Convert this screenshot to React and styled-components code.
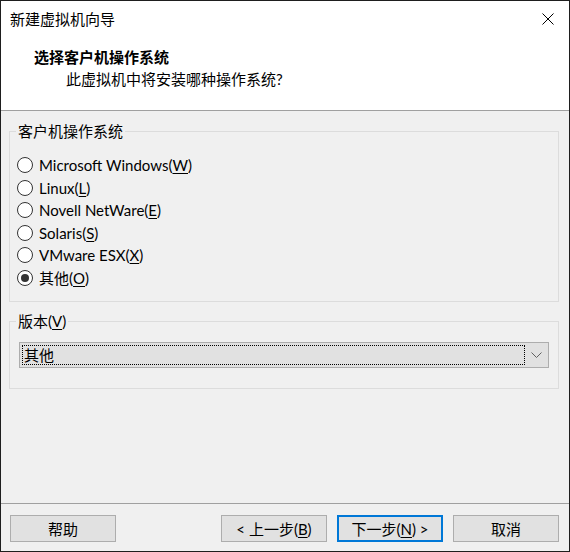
import React from "react";
import styled, { createGlobalStyle } from "styled-components";

const GlobalStyle = createGlobalStyle`
  html, body {
    margin: 0;
    padding: 0;
    background: #f0f0f0;
  }
  body {
    font-family: Lato, "Noto Sans CJK SC", sans-serif;
    font-size: 15px;
    color: #000;
  }
  * {
    box-sizing: border-box;
  }
`;

const Window = styled.div`
  width: 570px;
  height: 552px;
  border: 1px solid #1e1e1e;
  background: #f0f0f0;
  display: flex;
  flex-direction: column;
`;

const TitleBar = styled.div`
  height: 36px;
  background: #fff;
  display: flex;
  align-items: center;
  justify-content: space-between;
  padding-left: 9px;
  line-height: 22px;
`;

const CloseButton = styled.div`
  width: 46px;
  height: 36px;
  display: flex;
  align-items: center;
  justify-content: center;
  margin-right: -2px;
`;

const Header = styled.div`
  background: #fff;
  padding: 9px 0 20px 0;
  border-bottom: 1px solid #a0a0a0;
`;

const HeaderTitle = styled.div`
  font-weight: bold;
  line-height: 22px;
  padding-left: 33px;
`;

const HeaderSub = styled.div`
  line-height: 22px;
  padding-left: 65px;
`;

const Body = styled.div`
  flex: 1;
  padding: 9px 10px 0 8px;
  display: flex;
  flex-direction: column;
  gap: 8px;
`;

const Group = styled.fieldset`
  margin: 0;
  border: 1px solid #dcdcdc;
  padding: ${(p) => p.$pad};
  min-width: 0;
`;

const Legend = styled.legend`
  padding: 0 2px;
  margin-left: -1px;
  line-height: 22px;
`;

const RadioRow = styled.label`
  display: flex;
  align-items: center;
  height: 22.5px;
  gap: 6px;
`;

const RadioCircle = styled.span`
  width: 16px;
  height: 16px;
  border-radius: 50%;
  border: 1px solid #333;
  background: #fff;
  display: flex;
  align-items: center;
  justify-content: center;

  &::after {
    content: "";
    width: 8px;
    height: 8px;
    border-radius: 50%;
    background: ${(p) => (p.$checked ? "#333" : "transparent")};
  }
`;

const Key = styled.span`
  text-decoration: underline;
  text-underline-offset: 2px;
`;

const Combo = styled.div`
  height: 26px;
  margin: 0 2px 0 2px;
  border: 1px solid #adadad;
  background: #e1e1e1;
  display: flex;
  align-items: stretch;
  padding: 2px 0 2px 2px;
`;

const ComboValue = styled.div`
  flex: 1;
  border: 1px dotted #000;
  display: flex;
  align-items: center;
  padding-left: 1px;
  line-height: 20px;
`;

const ComboArrow = styled.div`
  width: 23px;
  display: flex;
  align-items: center;
  justify-content: center;
`;

const Footer = styled.div`
  border-top: 1px solid #a0a0a0;
  height: 48px;
  padding: 11px 10px 0 9px;
  display: flex;
  align-items: flex-start;
  gap: 10px;
`;

const Spacer = styled.div`
  flex: 1;
`;

const Button = styled.div`
  width: 106px;
  height: 27px;
  background: #e1e1e1;
  border: ${(p) => (p.$default ? "2px solid #0078d7" : "1px solid #adadad")};
  display: flex;
  align-items: center;
  justify-content: center;
  line-height: 20px;
`;

const options = [
  ["Microsoft Windows", "W"],
  ["Linux", "L"],
  ["Novell NetWare", "E"],
  ["Solaris", "S"],
  ["VMware ESX", "X"],
  ["其他", "O"],
];

export default function App() {
  return (
    <>
      <GlobalStyle />
      <Window>
        <TitleBar>
          <span>新建虚拟机向导</span>
          <CloseButton>
            <svg width="12" height="12" viewBox="0 0 12 12">
              <path d="M0.5 0.5L11.5 11.5M11.5 0.5L0.5 11.5" stroke="#000" strokeWidth="1" />
            </svg>
          </CloseButton>
        </TitleBar>
        <Header>
          <HeaderTitle>选择客户机操作系统</HeaderTitle>
          <HeaderSub>此虚拟机中将安装哪种操作系统?</HeaderSub>
        </Header>
        <Body>
          <Group $pad="12px 7px 12px 7px">
            <Legend>客户机操作系统</Legend>
            {options.map(([name, key]) => (
              <RadioRow key={key}>
                <RadioCircle $checked={key === "O"} />
                <span>
                  {name}(<Key>{key}</Key>)
                </span>
              </RadioRow>
            ))}
          </Group>
          <Group $pad="10px 7px 20px 7px">
            <Legend>
              版本(<Key>V</Key>)
            </Legend>
            <Combo>
              <ComboValue>其他</ComboValue>
              <ComboArrow>
                <svg width="11" height="6" viewBox="0 0 11 6">
                  <path d="M0.5 0.5L5.5 5.5L10.5 0.5" stroke="#606060" fill="none" strokeWidth="1" />
                </svg>
              </ComboArrow>
            </Combo>
          </Group>
        </Body>
        <Footer>
          <Button>帮助</Button>
          <Spacer />
          <Button>
            &lt; 上一步(<Key>B</Key>)
          </Button>
          <Button $default>
            下一步(<Key>N</Key>) &gt;
          </Button>
          <Button>取消</Button>
        </Footer>
      </Window>
    </>
  );
}
